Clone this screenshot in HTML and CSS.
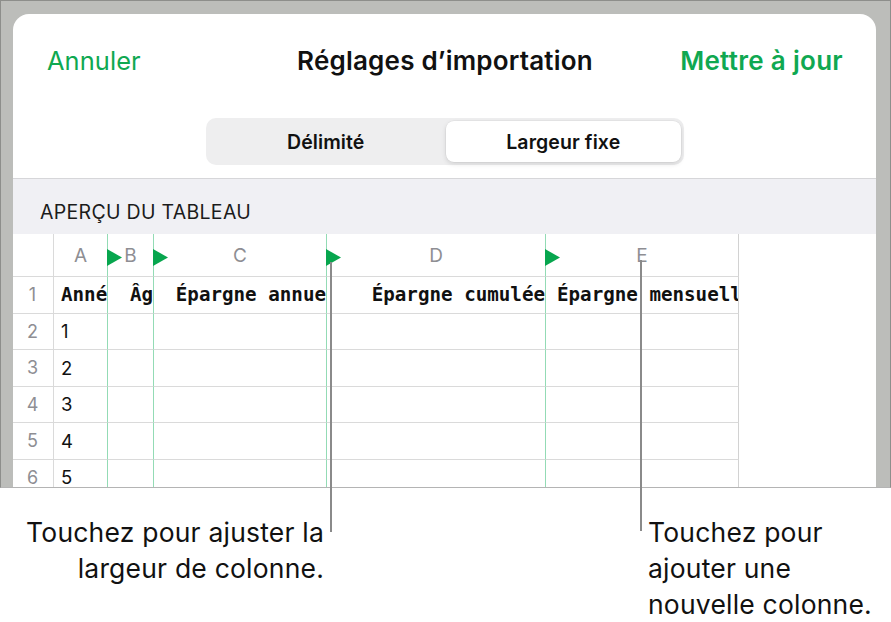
FILE: index.html
```html
<!DOCTYPE html>
<html lang="fr">
<head>
<meta charset="utf-8">
<title>Réglages d’importation</title>
<link rel="stylesheet" href="styles.css">
</head>
<body>
  <div class="frame">
    <div class="sheet">
      <header class="nav">
        <button class="nav-btn">Annuler</button>
        <h1 class="nav-title">Réglages d’importation</h1>
        <button class="nav-btn nav-btn--strong">Mettre à jour</button>
      </header>

      <div class="seg-wrap">
        <div class="segmented">
          <span class="seg">Délimité</span>
          <span class="seg seg--active">Largeur fixe</span>
        </div>
      </div>

      <div class="section-head">APERÇU DU TABLEAU</div>

      <div class="preview">
        <!-- column header row -->
        <div class="cell corner"></div>
        <div class="cell colhead split">A</div>
        <div class="cell colhead split"><i class="marker"></i>B</div>
        <div class="cell colhead split"><i class="marker"></i>C</div>
        <div class="cell colhead split"><i class="marker"></i>D</div>
        <div class="cell colhead last"><i class="marker"></i>E</div>
        <div class="cell blank"></div>

        <!-- row 1: headings -->
        <div class="cell rownum">1</div>
        <div class="cell mono split left">Anné</div>
        <div class="cell mono split right">Âg</div>
        <div class="cell mono split right">Épargne annue</div>
        <div class="cell mono split right">Épargne cumulée</div>
        <div class="cell mono last left wide">Épargne mensuell</div>
        <div class="cell blank"></div>

        <div class="cell rownum">2</div>
        <div class="cell val split">1</div>
        <div class="cell split"></div><div class="cell split"></div><div class="cell split"></div><div class="cell last"></div>
        <div class="cell blank"></div>

        <div class="cell rownum">3</div>
        <div class="cell val split">2</div>
        <div class="cell split"></div><div class="cell split"></div><div class="cell split"></div><div class="cell last"></div>
        <div class="cell blank"></div>

        <div class="cell rownum">4</div>
        <div class="cell val split">3</div>
        <div class="cell split"></div><div class="cell split"></div><div class="cell split"></div><div class="cell last"></div>
        <div class="cell blank"></div>

        <div class="cell rownum">5</div>
        <div class="cell val split">4</div>
        <div class="cell split"></div><div class="cell split"></div><div class="cell split"></div><div class="cell last"></div>
        <div class="cell blank"></div>

        <div class="cell rownum">6</div>
        <div class="cell val split">5</div>
        <div class="cell split"></div><div class="cell split"></div><div class="cell split"></div><div class="cell last"></div>
        <div class="cell blank"></div>
      </div>
    </div>
  </div>

  <div class="notes">
    <p class="note note--left">Touchez pour ajuster la<br>largeur de colonne.</p>
    <p class="note note--right">Touchez pour<br>ajouter une<br>nouvelle colonne.</p>
  </div>

  <!-- callout leader lines -->
  <span class="leader leader--width"></span>
  <span class="leader leader--add"></span>
</body>
</html>
```

FILE: styles.css
```css
* { box-sizing: border-box; }

html, body {
  margin: 0;
  padding: 0;
}

body {
  position: relative;
  width: 891px;
  height: 622px;
  overflow: hidden;
  background: #ffffff;
  font-family: "Inter", "Liberation Sans", sans-serif;
  color: #111111;
}

/* device bezel around the sheet */
.frame {
  background: #bcbdba;
  border: 1px solid #8d8e8b;
  border-bottom-color: #b4b4b4;
  padding: 13px 14px 0 12px;
}

.sheet {
  height: 473px;
  background: #ffffff;
  border-radius: 16px 16px 0 0;
  overflow: hidden;
}

/* navigation bar */
.nav {
  height: 92px;
  display: grid;
  grid-template-columns: 1fr auto 1fr;
  align-items: center;
  padding: 0 33px 0 34px;
}

.nav-btn {
  justify-self: start;
  border: 0;
  background: none;
  padding: 0;
  font: inherit;
  font-size: 25.4px;
  letter-spacing: 0.1px;
  color: #0fa851;
}

.nav-btn--strong {
  justify-self: end;
  font-size: 26px;
  font-weight: 600;
  letter-spacing: 0.3px;
}

.nav-title {
  margin: 0;
  font-size: 26px;
  font-weight: 600;
  letter-spacing: 0.2px;
  color: #111111;
}

/* segmented control */
.seg-wrap {
  display: flex;
  justify-content: center;
  padding: 12px 0 13px;
}

.segmented {
  width: 478px;
  height: 47px;
  display: grid;
  grid-template-columns: 1fr 1fr;
  padding: 3px;
  gap: 3px;
  background: #eeeeef;
  border-radius: 10px;
}

.seg {
  display: flex;
  align-items: center;
  justify-content: center;
  font-size: 19.5px;
  font-weight: 600;
  letter-spacing: 0.1px;
  color: #111111;
  border-radius: 8px;
}

.seg--active {
  background: #ffffff;
  box-shadow: 0 0 0 0.5px rgba(0, 0, 0, 0.06), 0 2px 5px rgba(0, 0, 0, 0.12);
}

/* section header band */
.section-head {
  height: 56px;
  display: flex;
  align-items: center;
  padding: 10px 0 0 27px;
  background: #f0f0f4;
  border-top: 1px solid #d6d6d9;
  font-size: 19.5px;
  letter-spacing: 0.3px;
  color: #1b1b1b;
}

/* table preview */
.preview {
  display: grid;
  grid-template-columns: 41px 54px 46px 173px 219px 193px 1fr;
  grid-template-rows: 43px repeat(6, 36.5px);
}

.cell {
  position: relative;
  display: flex;
  align-items: center;
  overflow: hidden;
  white-space: nowrap;
  border-bottom: 1px solid #dadada;
}

.corner,
.rownum {
  border-right: 1px solid #dadada;
}

.rownum {
  justify-content: center;
  font-size: 18px;
  color: #8e8e93;
  padding-right: 1px;
}

.split { border-right: 1px solid #93dbb5; }
.last  { border-right: 1px solid #d2d2d2; }

.blank { border-bottom: 0; }

.colhead {
  justify-content: center;
  overflow: visible;
  font-size: 19px;
  color: #8e8e93;
}

/* column-break handle */
.marker {
  position: absolute;
  left: -1px;
  top: 15px;
  width: 15px;
  height: 17px;
  background: #07a64e;
  clip-path: polygon(0 0, 100% 50%, 0 100%);
}

.mono {
  font-family: "DejaVu Sans Mono", "Liberation Mono", monospace;
  font-weight: 700;
  font-size: 19.2px;
  color: #111111;
}

.left  { justify-content: flex-start; padding-left: 7px; }
.right { justify-content: flex-end; padding-right: 0; }
.wide  { padding-left: 11px; }

.val {
  padding-left: 7px;
  font-size: 18.5px;
  color: #111111;
}

/* callouts below the screen */
.notes {
  display: flex;
  padding-top: 26px;
}

.note {
  margin: 0;
  font-size: 26.5px;
  letter-spacing: 0.2px;
  line-height: 36px;
  color: #111111;
}

.note--left {
  flex: 0 0 324px;
  text-align: right;
}

.note--right {
  margin-left: 324px;
}

.leader {
  position: absolute;
  width: 2px;
  background: #8a8a8a;
}

.leader--width {
  left: 330px;
  top: 262px;
  height: 270px;
}

.leader--add {
  left: 640px;
  top: 260px;
  height: 271px;
}
```
